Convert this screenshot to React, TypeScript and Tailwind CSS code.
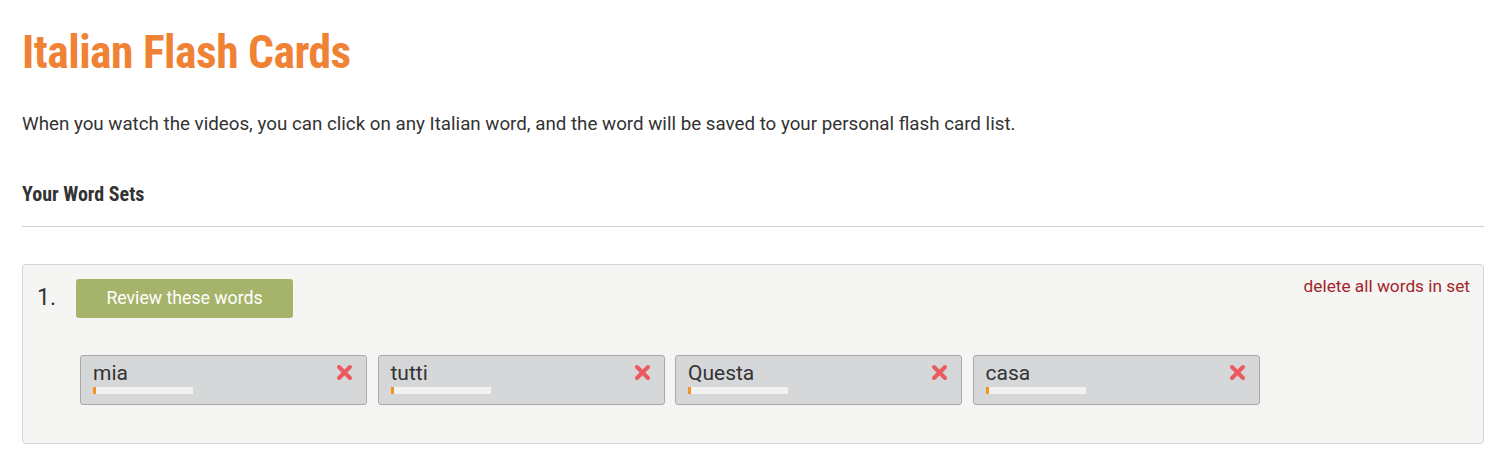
import React from "react";

const words = ["mia", "tutti", "Questa", "casa"];

function XIcon() {
  return (
    <svg width="17" height="17" viewBox="0 0 17 17">
      <path d="M3 3 L14 14 M14 3 L3 14" stroke="#ea5a5f" strokeWidth="4" strokeLinecap="round" />
    </svg>
  );
}

export default function App() {
  return (
    <div className="bg-white w-[1500px] h-[472px] pl-[22px] pr-[16px] pt-[29px]" style={{ fontFamily: "Roboto, 'Liberation Sans', sans-serif" }}>
      <h1 className="text-[45.5px] leading-[48px] font-bold text-[#f08236] tracking-[-0.5px]" style={{ fontFamily: "'Liberation Sans Narrow', 'Roboto Condensed', Roboto, sans-serif" }}>
        Italian Flash Cards
      </h1>
      <p className="mt-[35px] text-[18.75px] leading-[24px] text-[#333]">
        When you watch the videos, you can click on any Italian word, and the word will be saved to your personal flash card list.
      </p>
      <h3 className="mt-[46px] text-[20px] leading-[24px] font-bold text-[#333]" style={{ fontFamily: "'Liberation Sans Narrow', 'Roboto Condensed', Roboto, sans-serif" }}>
        Your Word Sets
      </h3>
      <div className="mt-[20px] border-t border-[#cfcfcf]" />
      <div className="mt-[37px] border border-[#d4d4d4] rounded-[4px] bg-[#f5f5f3] h-[180px] pl-[14px] pr-[13px] pt-[13px] relative">
        <div className="flex items-start justify-between">
          <div className="flex items-center gap-[20px]">
            <span className="text-[23px] leading-[40px] text-[#333]">1.</span>
            <button className="w-[217px] h-[39px] rounded-[3px] bg-[#a6b46b] text-white text-[17.7px]">
              Review these words
            </button>
          </div>
          <span className="text-[17.25px] leading-[20px] -mt-[2px] text-[#a3242a]">delete all words in set</span>
        </div>
        <div className="flex gap-[10.5px] pl-[43px] mt-[37px]">
          {words.map((w) => (
            <div key={w} className="w-[287px] h-[50px] rounded-[3px] border border-[#a9a9a9] bg-[#d6d7d9] relative pl-[12px] pt-[4px]">
              <div className="text-[21px] leading-[26px] text-[#333]">{w}</div>
              <div className="w-[100px] h-[7px] bg-[#f2f2f2] mt-[1px] flex">
                <div className="w-[3px] h-full bg-[#f39520]" />
              </div>
              <div className="absolute right-[13px] top-[8px]">
                <XIcon />
              </div>
            </div>
          ))}
        </div>
      </div>
    </div>
  );
}
